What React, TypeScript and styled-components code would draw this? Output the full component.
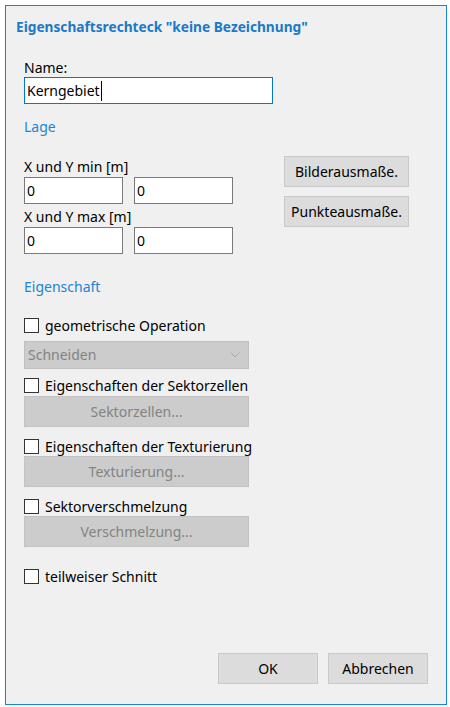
import React from "react";
import styled, { createGlobalStyle } from "styled-components";

const Global = createGlobalStyle`
  html, body { margin: 0; padding: 0; background: #ffffff; }
  body { font-family: "Noto Sans", "Open Sans", sans-serif; }
`;

const Dialog = styled.div`
  box-sizing: border-box;
  margin: 5px 0 0 5px;
  width: 442px;
  height: 700px;
  border: 1px solid #1883d7;
  background: #f0f0f0;
  display: flex;
  flex-direction: column;
  font-family: "Noto Sans", "Open Sans", sans-serif;
  font-size: 14px;
  color: #000;
`;

const Title = styled.h1`
  margin: 11px 0 0 10px;
  font-size: 13.7px;
  line-height: 20px;
  font-weight: 700;
  color: #1979ca;
`;

const Body = styled.div`
  flex: 1;
  display: flex;
  flex-direction: column;
  padding: 0 18px 20px 18px;
`;

const Label = styled.div<{ $mt?: number }>`
  margin-top: ${(p) => p.$mt ?? 0}px;
  line-height: 18px;
  height: 18px;
  white-space: nowrap;
`;

const SectionHeading = styled.div<{ $mt?: number }>`
  margin-top: ${(p) => p.$mt ?? 0}px;
  line-height: 18px;
  height: 18px;
  color: #2383d4;
`;

const TextField = styled.div<{ $w: number; $focused?: boolean; $mt?: number }>`
  box-sizing: border-box;
  margin-top: ${(p) => p.$mt ?? 0}px;
  width: ${(p) => p.$w}px;
  height: 27px;
  background: #fff;
  border: 1px solid ${(p) => (p.$focused ? "#0078d7" : "#7a7a7a")};
  padding: 0 0 0 2px;
  display: flex;
  align-items: center;
  line-height: 20px;
  white-space: nowrap;
`;

const Caret = styled.span`
  display: inline-block;
  width: 1px;
  height: 20px;
  background: #000;
  margin-left: 1px;
`;

const ExtentGrid = styled.div`
  margin-top: 20px;
  display: grid;
  grid-template-columns: 209px 125px;
  column-gap: 51px;
  align-items: start;
`;

const Column = styled.div`
  display: flex;
  flex-direction: column;
`;

const PairRow = styled.div<{ $mt?: number }>`
  display: flex;
  gap: 11px;
  margin-top: ${(p) => p.$mt ?? 0}px;
`;

const ButtonColumn = styled.div`
  display: flex;
  flex-direction: column;
  gap: 9px;
`;

const Button = styled.button<{ $w?: number; $mt?: number }>`
  box-sizing: border-box;
  margin: ${(p) => p.$mt ?? 0}px 0 0 0;
  width: ${(p) => (p.$w ? `${p.$w}px` : "100%")};
  height: 31px;
  padding: 0;
  background: #dcdcdc;
  border: 1px solid #c9c9c9;
  font-family: inherit;
  font-size: 14px;
  color: #000;
  line-height: 20px;
  white-space: nowrap;
  &:disabled {
    background: #cccccc;
    border-color: #c2c2c2;
    color: #838383;
  }
`;

const CheckRow = styled.label<{ $mt?: number }>`
  display: flex;
  align-items: center;
  gap: 6px;
  height: 17px;
  line-height: 17px;
  margin-top: ${(p) => p.$mt ?? 0}px;
  white-space: nowrap;
`;

const Box = styled.span`
  box-sizing: border-box;
  width: 15px;
  height: 15px;
  background: #fff;
  border: 1px solid #333;
  flex: none;
`;

const Combo = styled.div<{ $mt?: number }>`
  box-sizing: border-box;
  margin-top: ${(p) => p.$mt ?? 0}px;
  width: 225px;
  height: 28px;
  background: #cccccc;
  border: 1px solid #bfbfbf;
  color: #838383;
  display: flex;
  align-items: center;
  justify-content: space-between;
  padding: 0 8px 0 3px;
  line-height: 20px;
`;

const Footer = styled.div`
  margin-top: auto;
  display: flex;
  justify-content: flex-end;
  gap: 10px;
`;

const Chevron = () => (
  <svg width="10" height="6" viewBox="0 0 10 6">
    <path d="M0.5 0.5 L5 5 L9.5 0.5" fill="none" stroke="#a8a8a8" strokeWidth="1" />
  </svg>
);

const Check = ({ label, mt }: { label: string; mt?: number }) => (
  <CheckRow $mt={mt}>
    <Box />
    {label}
  </CheckRow>
);

export default function App() {
  return (
    <>
      <Global />
      <Dialog>
        <Title>Eigenschaftsrechteck "keine Bezeichnung"</Title>
        <Body>
          <Label $mt={22}>Name:</Label>
          <TextField $w={249} $focused>
            Kerngebiet
            <Caret />
          </TextField>
          <SectionHeading $mt={14}>Lage</SectionHeading>
          <ExtentGrid>
            <Column>
              <Label $mt={2}>X und Y min [m]</Label>
              <PairRow $mt={1}>
                <TextField $w={99}>0</TextField>
                <TextField $w={99}>0</TextField>
              </PairRow>
              <Label $mt={4}>X und Y max [m]</Label>
              <PairRow $mt={1}>
                <TextField $w={99}>0</TextField>
                <TextField $w={99}>0</TextField>
              </PairRow>
            </Column>
            <ButtonColumn>
              <Button>Bilderausmaße.</Button>
              <Button>Punkteausmaße.</Button>
            </ButtonColumn>
          </ExtentGrid>
          <SectionHeading $mt={24}>Eigenschaft</SectionHeading>
          <Check label="geometrische Operation" mt={21} />
          <Combo $mt={7}>
            <span>Schneiden</span>
            <Chevron />
          </Combo>
          <Check label="Eigenschaften der Sektorzellen" mt={8} />
          <Button $w={225} $mt={2} disabled>
            Sektorzellen...
          </Button>
          <Check label="Eigenschaften der Texturierung" mt={11} />
          <Button $w={225} $mt={1} disabled>
            Texturierung...
          </Button>
          <Check label="Sektorverschmelzung" mt={11} />
          <Button $w={225} $mt={1} disabled>
            Verschmelzung...
          </Button>
          <Check label="teilweiser Schnitt" mt={21} />
          <Footer>
            <Button $w={100}>OK</Button>
            <Button $w={100}>Abbrechen</Button>
          </Footer>
        </Body>
      </Dialog>
    </>
  );
}
